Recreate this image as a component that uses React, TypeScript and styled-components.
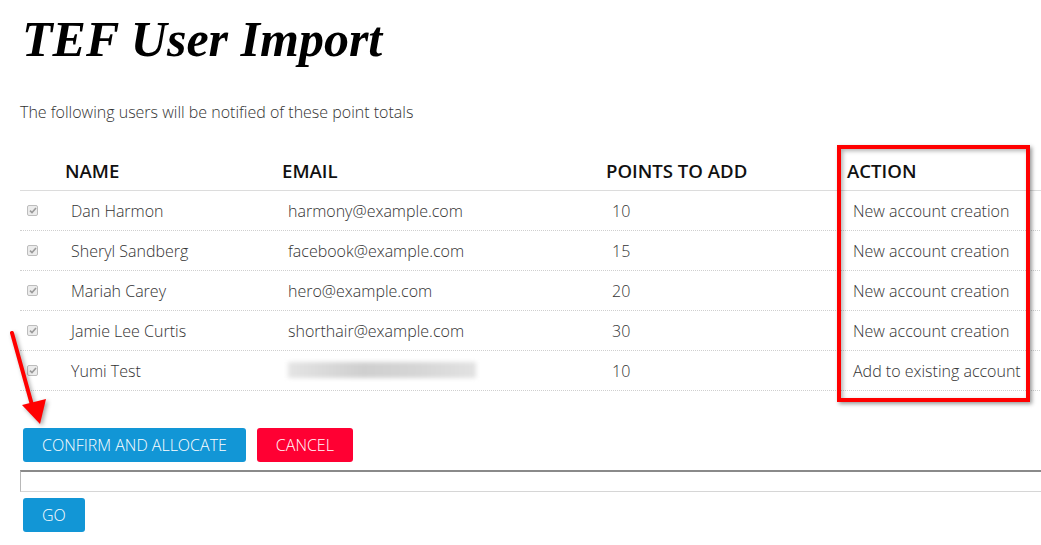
import React from "react";
import styled, { createGlobalStyle } from "styled-components";

const GlobalStyle = createGlobalStyle`
  html, body { margin: 0; padding: 0; background: #fff; overflow: hidden; }
  body { font-family: "Open Sans", "Liberation Sans", sans-serif; color: #333; }
`;

const Page = styled.div`
  position: relative;
  width: 1041px;
  height: 545px;
  padding-left: 20px;
  box-sizing: border-box;
  overflow: hidden;
`;

const Title = styled.h1`
  margin: 9px 0 0 2px;
  font-family: "Liberation Serif", "Times New Roman", serif;
  font-style: italic;
  font-weight: 700;
  font-size: 50px;
  line-height: 60px;
  color: #000;
`;

const Subtitle = styled.p`
  margin: 33px 0 0 0;
  font-size: 16px;
  font-weight: 300;
  line-height: 20px;
  color: #333;
`;

const Table = styled.div`
  position: relative;
  margin-top: 28px;
  width: 1060px;
`;

const Row = styled.div<{ $head?: boolean }>`
  display: grid;
  grid-template-columns: 40px 217px 324px 241px 1fr;
  align-items: center;
  box-sizing: border-box;
  height: ${(p) => (p.$head ? "41px" : "40px")};
  border-bottom: 1px ${(p) => (p.$head ? "solid #dcdcdc" : "dotted #cfcfcf")};
`;

const HeadCell = styled.div`
  padding: 0 0 0 5px;
  font-size: 18.6px;
  font-weight: 600;
  color: #111;
  text-transform: uppercase;
`;

const Cell = styled.div`
  padding-left: 11px;
  font-size: 16px;
  font-weight: 300;
  color: #333;
  white-space: nowrap;
`;

const CheckCell = styled.div`
  padding-left: 7px;
  display: flex;
  align-items: center;
`;

const CheckBox = styled.span`
  display: inline-flex;
  align-items: center;
  justify-content: center;
  width: 11px;
  height: 11px;
  box-sizing: border-box;
  border: 1px solid #bdbdbd;
  border-radius: 2px;
  background: #ececec;
`;

const Redacted = styled.span`
  display: inline-block;
  width: 188px;
  height: 16px;
  margin-top: 4px;
  background: linear-gradient(90deg, #e4e4e4, #cfcfcf 40%, #d6d6d6 70%, #e2e2e2);
  filter: blur(2px);
`;

const Highlight = styled.div`
  position: absolute;
  left: 817px;
  top: -5px;
  width: 193px;
  height: 257px;
  box-sizing: border-box;
  border: 4px solid #ff0000;
  box-shadow: 2px 2px 4px rgba(0, 0, 0, 0.4), inset 2px 2px 4px rgba(0, 0, 0, 0.3);
  pointer-events: none;
`;

const Arrow = styled.svg`
  position: absolute;
  left: 0;
  top: 325px;
  overflow: visible;
  filter: drop-shadow(2px 2px 2px rgba(0, 0, 0, 0.35));
`;

const ButtonRow = styled.div`
  display: flex;
  gap: 11px;
  margin: 37px 0 0 3px;
`;

const Button = styled.button<{ $variant?: "primary" | "danger" }>`
  height: 34px;
  padding: 0 19px;
  border: none;
  border-radius: 3px;
  background: ${(p) => (p.$variant === "danger" ? "#ff0033" : "#1296d6")};
  color: #fff;
  font-family: "Open Sans", "Liberation Sans", sans-serif;
  font-size: 16px;
  font-weight: 300;
  text-transform: uppercase;
  cursor: pointer;
`;

const TextInput = styled.input`
  display: block;
  margin-top: 8px;
  width: 1040px;
  height: 22px;
  box-sizing: border-box;
  border: 1px solid #d6d6d6;
  border-top: 2px solid #8a8a8a;
  border-left: 1px solid #b8b8b8;
  outline: none;
`;

const GoRow = styled.div`
  margin: 6px 0 0 3px;
`;

const users = [
  { name: "Dan Harmon", email: "harmony@example.com", points: 10, action: "New account creation" },
  { name: "Sheryl Sandberg", email: "facebook@example.com", points: 15, action: "New account creation" },
  { name: "Mariah Carey", email: "hero@example.com", points: 20, action: "New account creation" },
  { name: "Jamie Lee Curtis", email: "shorthair@example.com", points: 30, action: "New account creation" },
  { name: "Yumi Test", email: "", points: 10, action: "Add to existing account" },
];

const Check = () => (
  <CheckBox>
    <svg width="8" height="7" viewBox="0 0 8 7">
      <path d="M1 3.6 L3 5.6 L7 1" fill="none" stroke="#9a9a9a" strokeWidth="1.6" />
    </svg>
  </CheckBox>
);

export default function App() {
  return (
    <>
      <GlobalStyle />
      <Page>
        <Title>TEF User Import</Title>
        <Subtitle>The following users will be notified of these point totals</Subtitle>
        <Table>
          <Row $head>
            <div />
            <HeadCell>Name</HeadCell>
            <HeadCell>Email</HeadCell>
            <HeadCell>Points to add</HeadCell>
            <HeadCell>Action</HeadCell>
          </Row>
          {users.map((u) => (
            <Row key={u.name}>
              <CheckCell>
                <Check />
              </CheckCell>
              <Cell>{u.name}</Cell>
              <Cell>{u.email ? u.email : <Redacted />}</Cell>
              <Cell>{u.points}</Cell>
              <Cell>{u.action}</Cell>
            </Row>
          ))}
          <Highlight />
        </Table>
        <ButtonRow>
          <Button $variant="primary">Confirm and allocate</Button>
          <Button $variant="danger">Cancel</Button>
        </ButtonRow>
        <TextInput type="text" />
        <GoRow>
          <Button $variant="primary">Go</Button>
        </GoRow>
        <Arrow width="60" height="110" viewBox="0 0 60 110">
          <line x1="12" y1="8" x2="32" y2="80" stroke="#ff0000" strokeWidth="4" strokeLinecap="round" />
          <polygon points="22,80 46,74 40,99" fill="#ff0000" />
        </Arrow>
      </Page>
    </>
  );
}
